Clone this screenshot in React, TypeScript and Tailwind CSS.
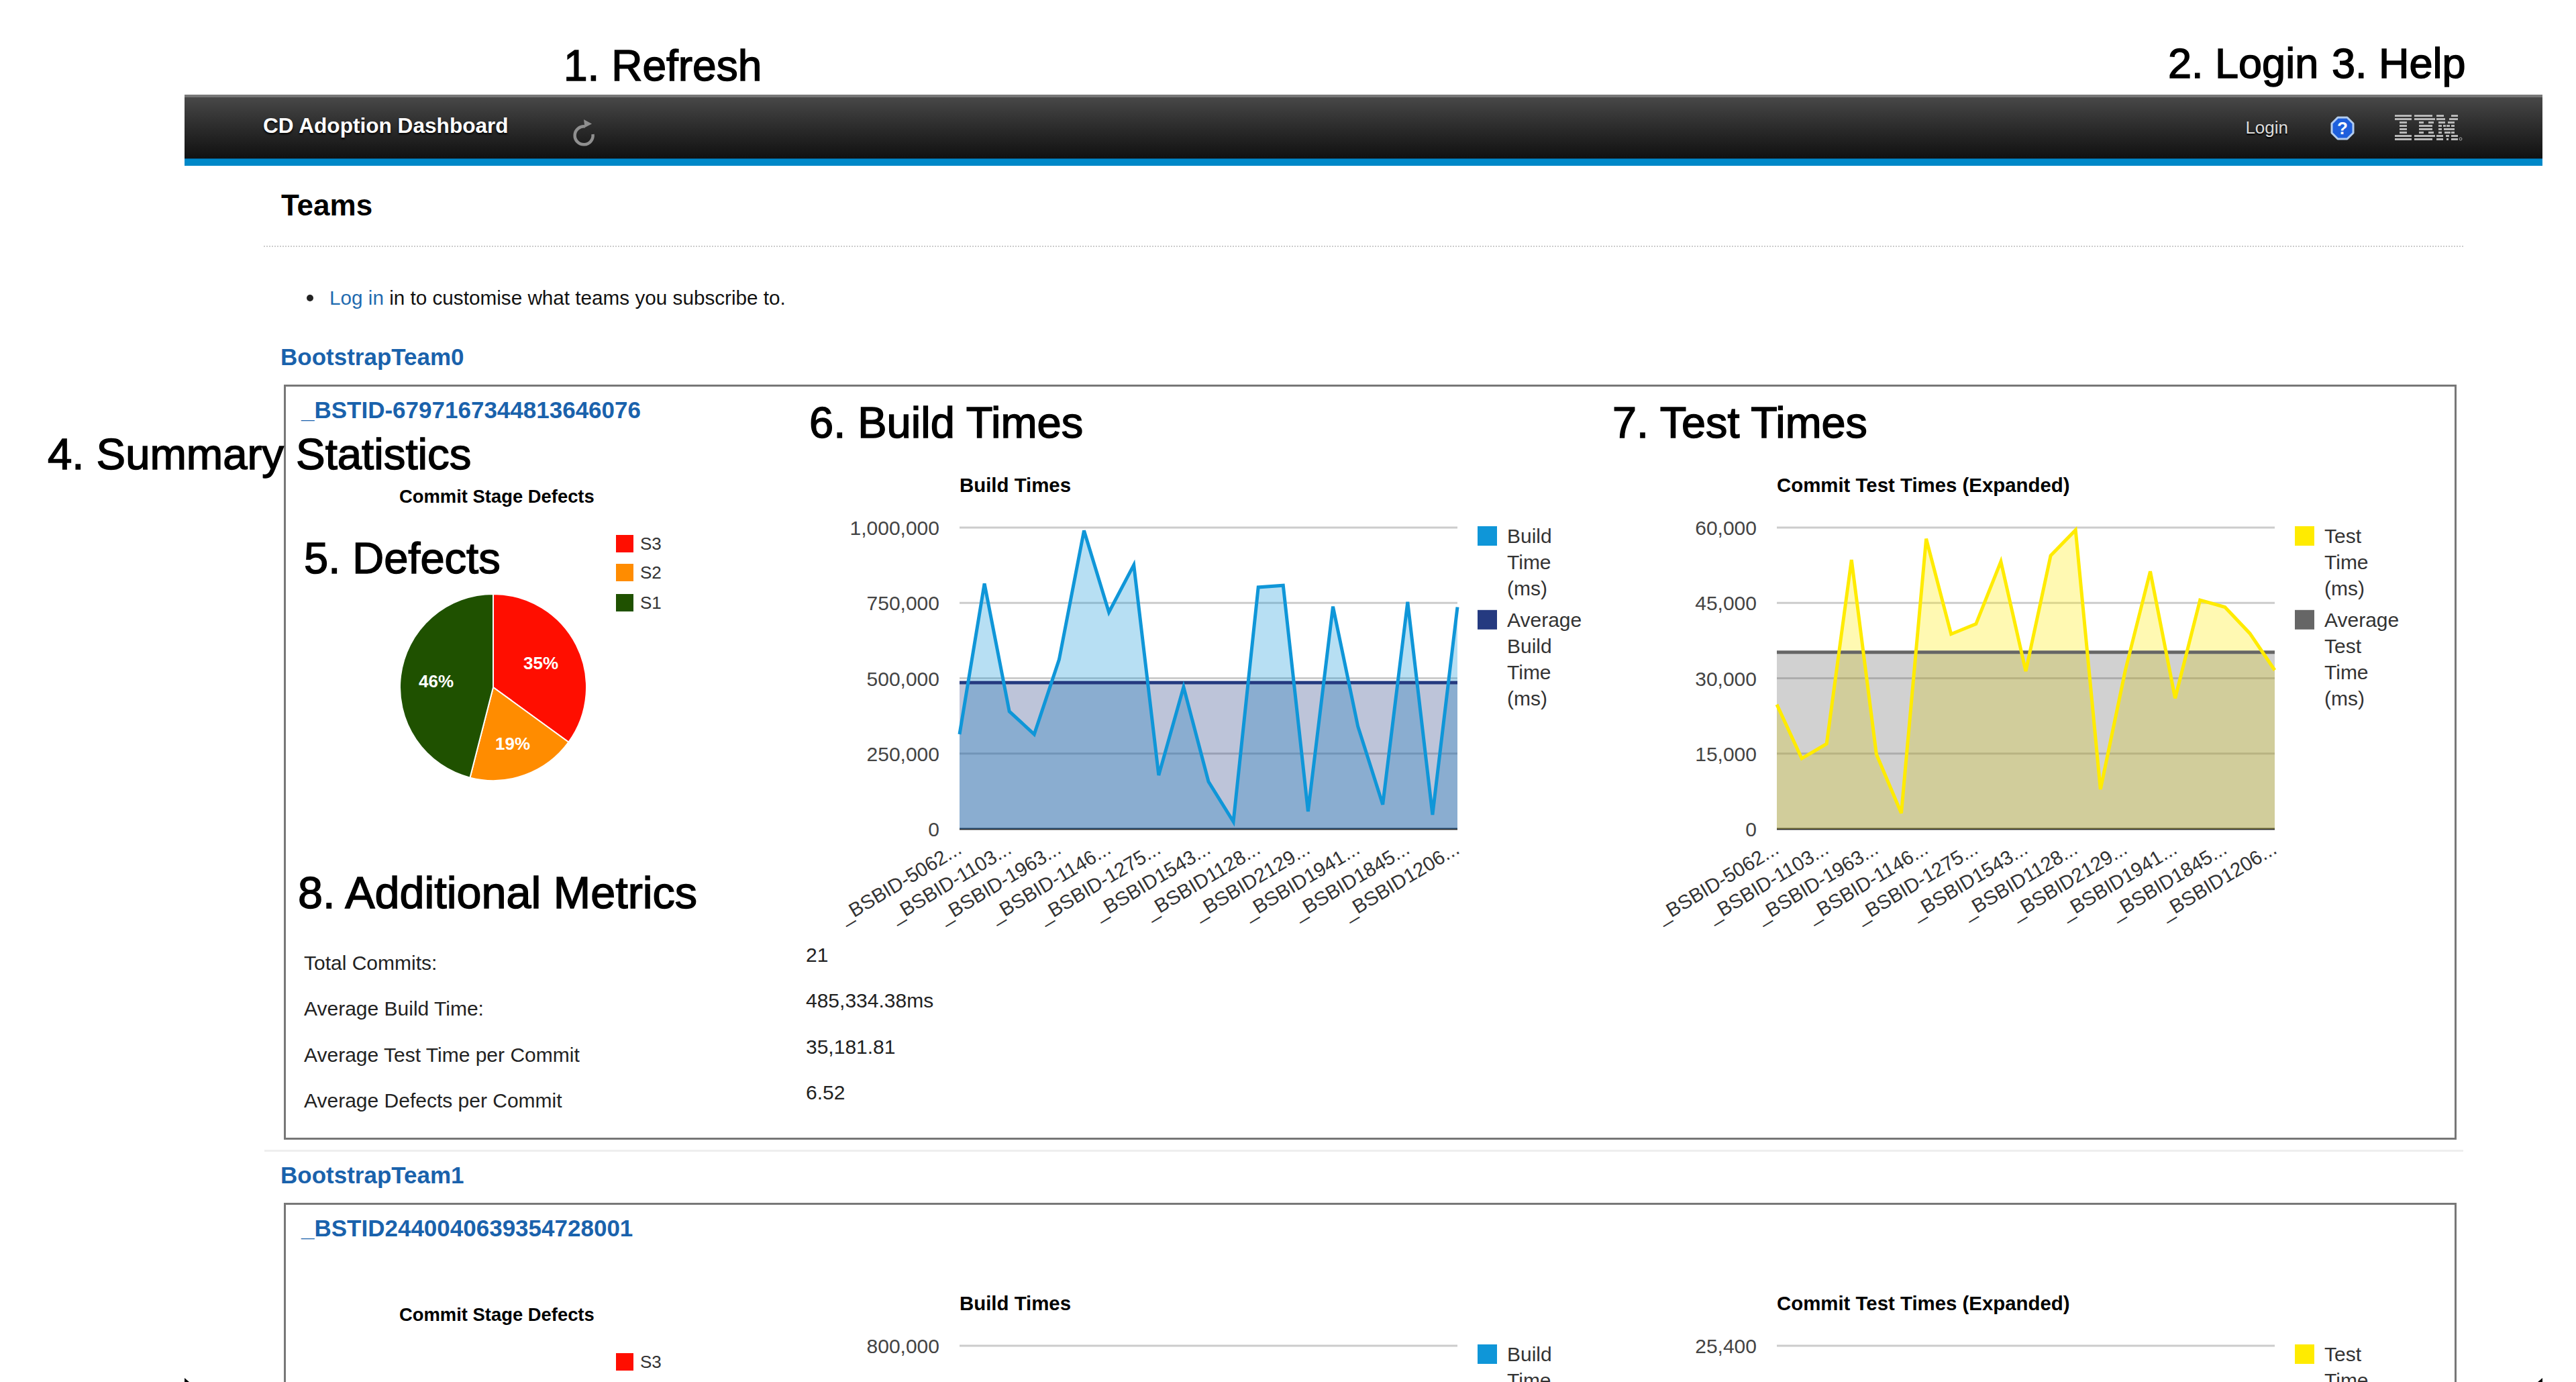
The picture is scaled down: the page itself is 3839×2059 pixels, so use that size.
const SANS = "font-['Liberation_Sans',Arial,sans-serif]";

type ChartProps = {
  title: string;
  ticks: string[];
  values?: number[];
  max: number;
  avg?: number;
  lineColor: string;
  avgColor: string;
  legend: { color: string; lines: string[] }[];
  plotLeft: number;
};

const BSBID = [
  '_BSBID-5062...',
  '_BSBID-1103...',
  '_BSBID-1963...',
  '_BSBID-1146...',
  '_BSBID-1275...',
  '_BSBID1543...',
  '_BSBID1128...',
  '_BSBID2129...',
  '_BSBID1941...',
  '_BSBID1845...',
  '_BSBID1206...',
];

const BUILD_VALUES = [
  314000, 814000, 390000, 314000, 562000, 990000, 719000, 876000, 178000, 471000, 157000, 24000,
  802000, 808000, 58000, 738000, 341000, 81000, 753000, 47000, 736000,
];

const TEST_VALUES = [
  24767, 14023, 16953, 53581, 14860, 3140, 57767, 38791, 40814, 53233, 31395, 54419, 59512, 7884,
  31605, 51279, 26023, 45558, 44163, 38930, 31605,
];

// plot box inside each chart svg
const TOP = 96;
const PLOT_H = 449;
const PLOT_W = 742;

function Chart({ title, ticks, values, max, avg, lineColor, avgColor, legend, plotLeft }: ChartProps) {
  const x0 = plotLeft;
  const y = (v: number) => TOP + PLOT_H - (v / max) * PLOT_H;
  const step = PLOT_W / 20;
  const pts = values?.map((v, i) => `${x0 + i * step},${y(v)}`).join(' ');
  let legendY = TOP - 2;

  return (
    <svg width="1218" height="710" className="block shrink-0" fontFamily="'Liberation Sans', Arial, sans-serif">
      <text x={x0} y={43} fontSize="29.4" fontWeight="700" fill="#000">
        {title}
      </text>

      {ticks.map((t, i) => {
        const ty = ticks.length === 1 ? TOP : TOP + (PLOT_H * i) / (ticks.length - 1);
        const last = i === ticks.length - 1 && ticks.length > 1;
        return (
          <g key={t}>
            <line x1={x0} x2={x0 + PLOT_W} y1={ty} y2={ty} stroke={last ? '#333333' : '#cccccc'} strokeWidth="3" />
            <text x={x0 - 30} y={ty + 11} fontSize="30" fill="#444444" textAnchor="end">
              {t}
            </text>
          </g>
        );
      })}

      {values && avg !== undefined && (
        <g>
          <polygon points={`${x0},${TOP + PLOT_H} ${pts} ${x0 + PLOT_W},${TOP + PLOT_H}`} fill={lineColor} fillOpacity="0.3" />
          <rect x={x0} y={y(avg)} width={PLOT_W} height={TOP + PLOT_H - y(avg)} fill={avgColor} fillOpacity="0.3" />
          <line x1={x0} x2={x0 + PLOT_W} y1={y(avg)} y2={y(avg)} stroke={avgColor} strokeWidth="5" />
          <polyline points={pts} fill="none" stroke={lineColor} strokeWidth="5" strokeLinejoin="miter" />
        </g>
      )}

      {values &&
        BSBID.map((label, i) => {
          const lx = x0 + i * 2 * step + 5;
          return (
            <text key={label} x={lx} y={TOP + PLOT_H + 35} fontSize="29.6" fill="#333333" textAnchor="end" transform={`rotate(-31 ${lx} ${TOP + PLOT_H + 35})`}>
              {label}
            </text>
          );
        })}

      {legend.map((item) => {
        const top = legendY;
        legendY += item.lines.length * 38.6 + 9;
        return (
          <g key={item.lines.join()}>
            <rect x={x0 + PLOT_W + 30} y={top} width="29" height="29" fill={item.color} />
            {item.lines.map((l, i) => (
              <text key={i} x={x0 + PLOT_W + 74} y={top + 25 + i * 39} fontSize="30" fill="#333333">
                {l}
              </text>
            ))}
          </g>
        );
      })}
    </svg>
  );
}

function pieSlice(cx: number, cy: number, r: number, from: number, to: number) {
  const a0 = (from * 2 - 0.5) * Math.PI;
  const a1 = (to * 2 - 0.5) * Math.PI;
  const large = to - from > 0.5 ? 1 : 0;
  return `M${cx} ${cy} L${cx + r * Math.cos(a0)} ${cy + r * Math.sin(a0)} A${r} ${r} 0 ${large} 1 ${cx + r * Math.cos(a1)} ${cy + r * Math.sin(a1)} Z`;
}

function Defects({ pie }: { pie: boolean }) {
  return (
    <svg width="758" height="710" className="block shrink-0" fontFamily="'Liberation Sans', Arial, sans-serif">
      <text x={169} y={59} fontSize="27.4" fontWeight="700" fill="#000">
        Commit Stage Defects
      </text>
      {[
        ['#ff0e00', 'S3', 107],
        ['#ff8c00', 'S2', 150],
        ['#1f5100', 'S1', 195],
      ].map(([color, name, top]) => (
        <g key={name as string}>
          <rect x={492} y={top as number} width="26" height="26" fill={color as string} />
          <text x={528} y={(top as number) + 22} fontSize="26" fill="#333333">
            {name}
          </text>
        </g>
      ))}
      {pie && (
        <g stroke="#ffffff" strokeWidth="2">
          <path d={pieSlice(309, 334, 139, 0, 0.35)} fill="#ff0e00" />
          <path d={pieSlice(309, 334, 139, 0.35, 0.54)} fill="#ff8c00" />
          <path d={pieSlice(309, 334, 139, 0.54, 1)} fill="#1f5100" />
        </g>
      )}
      {pie && (
        <g fontSize="26" fontWeight="700" fill="#ffffff" textAnchor="middle">
          <text x={380} y={307}>35%</text>
          <text x={338} y={427}>19%</text>
          <text x={224} y={334}>46%</text>
        </g>
      )}
    </svg>
  );
}

function Metrics() {
  const rows = [
    ['Total Commits:', '21'],
    ['Average Build Time:', '485,334.38ms'],
    ['Average Test Time per Commit', '35,181.81'],
    ['Average Defects per Commit', '6.52'],
  ];
  return (
    <div className="pb-[21px] pl-[27px]">
      {rows.map(([label, value]) => (
        <div key={label} className="flex h-[68.5px] items-center text-[30px] text-[#222222]">
          <div className="w-[748px] shrink-0">{label}</div>
          <div className="pb-[24px]">{value}</div>
        </div>
      ))}
    </div>
  );
}

function Card({ id, full }: { id: string; full: boolean }) {
  return (
    <div className="ml-[148px] w-[3238px] border-[3px] border-[#777777]">
      <div className="pl-[23px] pt-[13px] text-[35px] leading-[44px] font-bold text-[#1a62ac]">{id}</div>
      <div className="mt-[57px] flex">
        <Defects pie={full} />
        <Chart
          title="Build Times"
          ticks={full ? ['1,000,000', '750,000', '500,000', '250,000', '0'] : ['800,000']}
          values={full ? BUILD_VALUES : undefined}
          max={1000000}
          avg={full ? 485334 : undefined}
          lineColor="#0f96d8"
          avgColor="#253a80"
          plotLeft={246}
          legend={[
            { color: '#0f96d8', lines: ['Build', 'Time', '(ms)'] },
            { color: '#253a80', lines: ['Average', 'Build', 'Time', '(ms)'] },
          ]}
        />
        <Chart
          title="Commit Test Times (Expanded)"
          ticks={full ? ['60,000', '45,000', '30,000', '15,000', '0'] : ['25,400']}
          values={full ? TEST_VALUES : undefined}
          max={60000}
          avg={full ? 35182 : undefined}
          lineColor="#ffeb00"
          avgColor="#666666"
          plotLeft={246}
          legend={[
            { color: '#ffeb00', lines: ['Test', 'Time', '(ms)'] },
            { color: '#666666', lines: ['Average', 'Test', 'Time', '(ms)'] },
          ]}
        />
      </div>
      {full && <Metrics />}
    </div>
  );
}

function RefreshIcon() {
  return (
    <svg width="40" height="44" viewBox="0 0 40 44" fill="none" className="mt-[14px]">
      <path d="M22 12.5 A13.5 13.5 0 1 0 33.5 24" stroke="#8f8f8f" strokeWidth="4.5" />
      <path d="M20 2 L32 8.5 L21.5 14 Z" fill="#8f8f8f" />
    </svg>
  );
}

function HelpIcon() {
  return (
    <svg width="36" height="36" viewBox="0 0 36 36">
      <polygon points="11,2 25,2 34,11 34,25 25,34 11,34 2,25 2,11" fill="#1e5fdc" stroke="#b4cdee" strokeWidth="3" strokeLinejoin="round" />
      <text x="18" y="27" fontSize="26" fontWeight="700" fill="#ffffff" textAnchor="middle" fontFamily="'Liberation Sans', Arial, sans-serif">
        ?
      </text>
    </svg>
  );
}

function IbmLogo() {
  const rows = [
    [[0, 25], [29, 27], [62, 11], [84, 10]],
    [[0, 25], [29, 31], [62, 13], [81, 13]],
    [[7, 11], [36, 7], [50, 8], [65, 10], [79, 10]],
    [[7, 11], [36, 20], [65, 5], [72, 4], [77, 5], [84, 5]],
    [[7, 11], [36, 20], [65, 5], [73, 11], [84, 5]],
    [[7, 11], [36, 7], [50, 8], [65, 5], [74, 9], [84, 5]],
    [[0, 25], [29, 31], [62, 10], [76, 5], [84, 10]],
    [[0, 25], [29, 27], [62, 10], [77, 3], [84, 10]],
  ];
  return (
    <svg width="102" height="40" viewBox="0 0 102 40">
      {rows.map((row, r) =>
        row.map(([x, w], i) => <rect key={`${r}-${i}`} x={x} y={r * 5} width={w} height="3" fill="#b8b8b8" />),
      )}
      <circle cx="98" cy="36" r="2" fill="none" stroke="#aaaaaa" />
    </svg>
  );
}

function Note({ className, children }: { className: string; children: string }) {
  return (
    <div className={`absolute whitespace-nowrap leading-[72px] text-black [-webkit-text-stroke:1.5px_black] ${className}`}>
      {children}
    </div>
  );
}

export default function App() {
  return (
    <div className={`relative h-[2059px] w-[3839px] overflow-hidden bg-white pl-[275px] pt-[141px] ${SANS}`}>
      <header className="flex h-[106px] w-[3514px] flex-col">
        <div className="flex flex-1 items-center border-t-[4px] border-[#777777] bg-gradient-to-b from-[#484848] to-[#111111] pl-[117px] pr-[118px]">
          <div className="mb-[5px] w-[458px] text-[31.6px] font-bold text-white [text-shadow:0_2px_3px_#000]">CD Adoption Dashboard</div>
          <RefreshIcon />
          <div className="ml-auto flex items-center">
            <span className="mr-[63px] text-[26px] text-[#dddddd] [text-shadow:0_2px_2px_#000]">Login</span>
            <span className="mr-[60px]">
              <HelpIcon />
            </span>
            <IbmLogo />
          </div>
        </div>
        <div className="h-[11px] border-t border-[#00629a] bg-[#0088c8]" />
      </header>

      <h1 className="ml-[144px] mt-[34px] text-[44px] leading-[50px] font-bold text-black">Teams</h1>
      <div className="ml-[118px] mt-[35px] w-[3278px] border-t-[2px] border-dotted border-[#cccccc]" />

      <ul className="ml-[182px] mt-[56px] text-[29.7px] leading-[40px] text-[#111111]">
        <li className="flex items-center gap-[24px]">
          <span className="h-[10px] w-[10px] rounded-full bg-[#222222]" />
          <span>
            <span className="text-[#1f6bb0]">Log in</span> in to customise what teams you subscribe to.
          </span>
        </li>
      </ul>

      <div className="ml-[143px] mt-[46px] text-[35px] leading-[44px] font-bold text-[#1a62ac]">BootstrapTeam0</div>
      <div className="mt-[19px]">
        <Card id="_BSTID-6797167344813646076" full />
      </div>

      <div className="ml-[119px] mt-[15px] h-[3px] w-[3277px] bg-[#eeeeee]" />

      <div className="ml-[143px] mt-[13px] text-[35px] leading-[44px] font-bold text-[#1a62ac]">BootstrapTeam1</div>
      <div className="mt-[19px]">
        <Card id="_BSTID2440040639354728001" full={false} />
      </div>

      <Note className="left-[840px] top-[62px] text-[64px]">1. Refresh</Note>
      <Note className="left-[3231px] top-[58px] text-[63px]">2. Login</Note>
      <Note className="left-[3475px] top-[58px] text-[63px]">3. Help</Note>
      <Note className="left-[71px] top-[641px] text-[65.3px]">4. Summary Statistics</Note>
      <Note className="left-[453px] top-[796px] text-[65px]">5. Defects</Note>
      <Note className="left-[1206px] top-[594px] text-[65px]">6. Build Times</Note>
      <Note className="left-[2403px] top-[594px] text-[64.7px]">7. Test Times</Note>
      <Note className="left-[444px] top-[1294px] text-[66.5px]">8. Additional Metrics</Note>

      <div className="absolute left-[275px] top-[2053px] h-0 w-0 border-b-[6px] border-r-[7px] border-b-black border-r-transparent" />
      <div className="absolute left-[3782px] top-[2053px] h-0 w-0 border-b-[6px] border-l-[7px] border-b-black border-l-transparent" />
    </div>
  );
}
